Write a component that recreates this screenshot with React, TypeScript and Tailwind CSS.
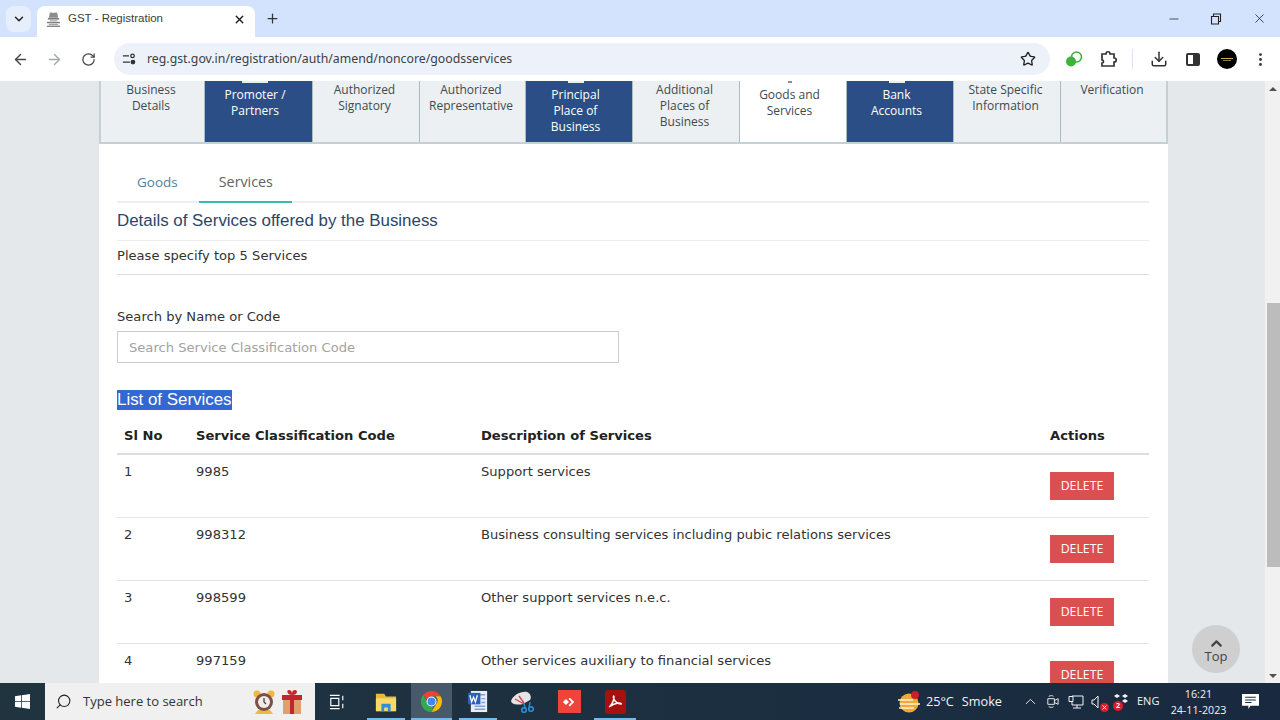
import { ArrowLeft, ArrowRight, ChevronDown, ChevronUp, Download, EllipsisVertical, Plus, RotateCw, Search, Star, X, Minus } from "lucide-react"

const steps = [
  { lines: ["Business", "Details"], kind: "plain" },
  { lines: ["Promoter /", "Partners"], kind: "done", mark: "w-[26px]" },
  { lines: ["Authorized", "Signatory"], kind: "plain" },
  { lines: ["Authorized", "Representative"], kind: "plain" },
  { lines: ["Principal", "Place of", "Business"], kind: "done", mark: "w-4" },
  { lines: ["Additional", "Places of", "Business"], kind: "plain" },
  { lines: ["Goods and", "Services"], kind: "current", mark: "w-1" },
  { lines: ["Bank", "Accounts"], kind: "done", mark: "w-4" },
  { lines: ["State Specific", "Information"], kind: "plain" },
  { lines: ["Verification"], kind: "plain" },
]

const services = [
  { no: 1, code: "9985", desc: "Support services" },
  { no: 2, code: "998312", desc: "Business consulting services including pubic relations services" },
  { no: 3, code: "998599", desc: "Other support services n.e.c." },
  { no: 4, code: "997159", desc: "Other services auxiliary to financial services" },
]

function Emblem() {
  return (
    <svg viewBox="0 0 16 16" className="h-[15px] w-[15px]">
      <path d="M4 1c1-1 3 0 4 0s3-1 4 0l1 5H3z" fill="#8d8d8d" />
      <path d="M2 6.500h12V8H2z" fill="#6f6f6f" />
      <path d="M4 8.500h8v1.500H4z" fill="#b5b5b5" />
      <path d="M1 10.500h14V12H1z" fill="#7d7d7d" />
      <path d="M3 12.500h10V14H3z" fill="#a5a5a5" />
      <path d="M1 14.500h14V16H1z" fill="#858585" />
    </svg>
  )
}

function ChromeLogo() {
  return (
    <svg viewBox="0 0 24 24" className="h-[23px] w-[23px]">
      <path d="M12 1a11 11 0 0 1 9.500 5.500H12a5.500 5.500 0 0 0-5 3.200L3.500 5A11 11 0 0 1 12 1z" fill="#ea4335" />
      <path d="M21.500 6.500A11 11 0 0 1 12 23l4.800-8.200a5.500 5.500 0 0 0-.6-8.300z" fill="#fbbc05" />
      <path d="M12 23A11 11 0 0 1 3.500 5L8 13.500a5.500 5.500 0 0 0 6 4z" fill="#34a853" />
      <circle cx="12" cy="12" r="5.200" fill="#fff" />
      <circle cx="12" cy="12" r="4.200" fill="#4285f4" />
    </svg>
  )
}

function TaskIcons() {
  return (
    <div className="flex h-full">
      {/* task view */}
      <div className="flex w-[44px] items-center justify-center">
        <svg viewBox="0 0 18 18" className="h-4 w-4" fill="none" stroke="#fff" strokeWidth="1.300">
          <path d="M1 1.500h11M1 16.500h11M2 5h9v8H2zM15.500 2v5M15.500 11v5" />
        </svg>
      </div>
      <div className="relative ml-[5px] flex w-[44px] items-center justify-center">
        <svg viewBox="0 0 24 24" className="h-[22px] w-[22px]">
          <path d="M1 3h9l2 3h11v16H1z" fill="#e8b93f" />
          <path d="M1 8h22v14H1z" fill="#fbd968" />
          <path d="M7 14h10v8h-3v-4h-4v4H7z" fill="#2e8fd6" />
        </svg>
        <div className="absolute bottom-0 left-[3px] right-[3px] h-[2px] bg-[#76b9ed]" />
      </div>
      <div className="relative ml-[3px] flex w-[41px] items-center justify-center bg-[#47596a]">
        <ChromeLogo />
        <div className="absolute bottom-0 left-0 right-0 h-[2px] bg-[#76b9ed]" />
      </div>
      <div className="relative ml-[4px] flex w-[44px] items-center justify-center">
        <svg viewBox="0 0 24 24" className="h-[23px] w-[23px]">
          <path d="M4 1h17v22H4z" fill="#e9eef6" />
          <path d="M12 5h7M15 9h4M15 13h4M8 17h11M8 20h11" stroke="#7ca3d8" strokeWidth="1.500" />
          <path d="M1 3h13v12H1z" fill="#2b62b8" />
          <path d="M3 5.500l1.800 7 2-5 2 5 2-7" fill="none" stroke="#fff" strokeWidth="1.300" />
        </svg>
        <div className="absolute bottom-0 left-[3px] right-[3px] h-[2px] bg-[#76b9ed]" />
      </div>
      <div className="flex w-[44px] items-center justify-center">
        <svg viewBox="0 0 24 24" className="h-[24px] w-[24px]">
          <path d="M1 11C3 5 11 1 17 2c3 1 5 5 3 8l-7 4c-5 1-11 1-12-3z" fill="#e9e4e4" />
          <path d="M5 9l9 5M9 6l5 7" stroke="#c94a56" strokeWidth="1.400" />
          <circle cx="14" cy="20" r="2.300" fill="none" stroke="#2a8fd8" strokeWidth="1.600" />
          <circle cx="21" cy="19" r="2.300" fill="none" stroke="#2a8fd8" strokeWidth="1.600" />
          <path d="M14 13l1 5M20 12l-1 6" stroke="#2a8fd8" strokeWidth="1.400" />
        </svg>
      </div>
      <div className="ml-[3px] flex w-[44px] items-center justify-center">
        <div className="flex h-[23px] w-[23px] items-center justify-center bg-[#ef443b]">
          <svg viewBox="0 0 16 16" className="h-[14px] w-[14px]" fill="#fff">
            <path d="M4.500 4.500L8 8l-3.500 3.500L1 8zM9 3l5 5-5 5-1.500-1.500L11 8 7.500 4.500z" />
          </svg>
        </div>
      </div>
      <div className="relative ml-[2px] flex w-[44px] items-center justify-center">
        <div className="flex h-[24px] w-[21px] items-center justify-center rounded-[3px] bg-[#a80f0f]">
          <svg viewBox="0 0 16 16" className="h-[16px] w-[16px]" fill="none" stroke="#fff" strokeWidth="1.400">
            <path d="M2 13c3-2 5-7 5-10 0-2-1-1-.5 1 .8 3 4 6 7.500 6 1 0-.5-1.500-3-1-3 .5-6 2-9 4z" />
          </svg>
        </div>
        <div className="absolute bottom-0 left-[1px] right-[1px] h-[2px] bg-[#76b9ed]" />
      </div>
    </div>
  )
}

function Tray() {
  return (
    <div className="ml-auto flex h-full items-center text-[#f2f4f5] font-['Open_Sans',sans-serif]">
      <svg viewBox="0 0 24 24" className="h-[24px] w-[24px]">
        <circle cx="12" cy="13" r="9.500" fill="#f2a93b" />
        <path d="M1 10h15M3 14h20M2 18h15" stroke="#fff1cf" strokeWidth="1.500" />
        <circle cx="18" cy="5" r="4" fill="#c8202a" />
      </svg>
      <span className="ml-[5px] text-[12.700px]">25°C</span>
      <span className="ml-[8px] text-[12.700px]">Smoke</span>
      <ChevronUp className="ml-[20px] h-[17px] w-[17px]" strokeWidth={1.300} />
      <svg viewBox="0 0 16 16" className="ml-[6px] h-[15px] w-[15px]" fill="none" stroke="#f2f4f5" strokeWidth="1">
        <path d="M3 5h7v6H3zM10 7l4-2v6l-4-2M4 2.500c2-1 4-1 5 0M4 13.500c2 1 4 1 5 0" />
      </svg>
      <svg viewBox="0 0 16 16" className="ml-[8px] h-[16px] w-[16px]" fill="none" stroke="#f2f4f5" strokeWidth="1">
        <path d="M4 2h11v9H4M1 2.500h4v5H1zM9 11v3M5 14h8M4 8v3" />
      </svg>
      <div className="relative ml-[7px] h-[16px] w-[16px]">
        <svg viewBox="0 0 16 16" className="h-[16px] w-[16px]" fill="none" stroke="#f2f4f5" strokeWidth="1">
          <path d="M1 6h2l4-4v12l-4-4H1z" />
        </svg>
        <div className="absolute bottom-[-2px] right-[-2px] flex h-[9px] w-[9px] items-center justify-center rounded-full bg-[#d3202c]">
          <X className="h-[7px] w-[7px] text-white" strokeWidth={3} />
        </div>
      </div>
      <div className="relative ml-[6px] h-[16px] w-[16px]">
        <svg viewBox="0 0 16 16" className="h-[16px] w-[16px]" fill="#f2f4f5">
          <path d="M4 0l3 2-3 2-3-2zM12 0l3 2-3 2-3-2zM12 5l3 2-3 2-3-2z" />
        </svg>
        <div className="absolute bottom-[-1px] left-0 flex h-[10px] w-[10px] items-center justify-center rounded-full bg-[#d3202c] text-[7px] font-bold leading-none text-white">2</div>
      </div>
      <span className="ml-[8px] w-[22px] text-[11px]">ENG</span>
      <div className="ml-[12px] flex w-[55px] flex-col items-center text-[10.700px] leading-[16px]">
        <span>16:21</span>
        <span className="whitespace-nowrap">24-11-2023</span>
      </div>
      <div className="ml-[13px] flex w-[22px] justify-center">
        <svg viewBox="0 0 16 16" className="h-[17px] w-[17px]" fill="#fff">
          <path d="M0 1h16v11H8l-2 3v-3H0z" />
          <path d="M3 4h10M3 6.500h10M3 9h6" stroke="#1b2d3e" strokeWidth="1" />
        </svg>
      </div>
      <div className="w-[19px]" />
    </div>
  )
}

export default function App() {
  return (
    <div className="flex h-[720px] w-[1280px] flex-col overflow-hidden bg-white font-['Noto_Sans',sans-serif]">
      {/* tab strip */}
      <div className="flex h-[37px] items-end bg-[#d3e3fd] pl-[6px]">
        <div className="mb-[5px] flex h-[26px] w-[25px] items-center justify-center rounded-lg bg-[#e7eefb]">
          <ChevronDown className="h-[14px] w-[14px] text-[#1f1f1f]" strokeWidth={2.500} />
        </div>
        <div className="ml-[6px] flex h-[31px] w-[218px] items-center rounded-t-lg bg-white pb-[5px] pl-[9px] pr-[9px]">
          <Emblem />
          <span className="ml-[7px] font-['Liberation_Sans',sans-serif] text-[11.500px] text-[#3c4043]">GST - Registration</span>
          <X className="ml-auto h-[13px] w-[13px] text-[#1f1f1f]" strokeWidth={2.500} />
        </div>
        <Plus className="mb-[11px] ml-[10px] h-[15px] w-[15px] text-[#333]" strokeWidth={2} />
        <div className="mb-[11px] ml-auto flex items-center pr-[13px] text-[#222]">
          <Minus className="h-[14px] w-[14px]" strokeWidth={1.300} />
          <svg viewBox="0 0 12 12" className="ml-[29px] h-[12px] w-[12px]" fill="none" stroke="currentColor" strokeWidth="1.100">
            <path d="M1.500 3.500h7v7.500h-7zM3.500 3.500V1h7v7.500H8.500" />
          </svg>
          <X className="ml-[30px] h-[15px] w-[15px]" strokeWidth={1.300} />
        </div>
      </div>

      {/* toolbar */}
      <div className="flex h-[44px] items-center rounded-t-lg bg-white pl-[12px]">
        <ArrowLeft className="h-[17px] w-[17px] text-[#444746]" strokeWidth={2} />
        <ArrowRight className="ml-[17px] h-[17px] w-[17px] text-[#a5a7a9]" strokeWidth={2} />
        <RotateCw className="ml-[18px] h-[15px] w-[15px] text-[#444746]" strokeWidth={2} />
        <div className="ml-[18px] flex h-[32px] w-[936px] shrink-0 items-center rounded-full bg-[#edf2fa] pl-[8px] pr-[14px]">
          <svg viewBox="0 0 16 16" className="h-[14px] w-[14px]" fill="none" stroke="#333" strokeWidth="1.500">
            <path d="M1 4.500h7M1 11.500h8" />
            <circle cx="12" cy="4.500" r="2" />
            <circle cx="12.500" cy="11.500" r="2" fill="#333" />
          </svg>
          <span className="ml-[11px] pt-[1px] text-[12.300px] text-[#3c4043]">reg.gst.gov.in/registration/auth/amend/noncore/goodsservices</span>
          <Star className="ml-auto h-[16px] w-[16px] text-[#222]" strokeWidth={2} />
        </div>
        <svg viewBox="0 0 18 18" className="ml-[15px] h-[18px] w-[18px] shrink-0" fill="none">
          <circle cx="6" cy="11.500" r="5" fill="#3cb43c" />
          <circle cx="11.500" cy="7" r="5" stroke="#3cb43c" strokeWidth="1.600" />
        </svg>
        <svg viewBox="0 0 18 18" className="ml-[17px] h-[18px] w-[18px] shrink-0" fill="none" stroke="#333" strokeWidth="1.700">
          <path d="M2 4h4c0-3 4-3 4 0h4v4c3 0 3 4 0 4v4H2v-3c2 0 2-3 0-3z" />
        </svg>
        <div className="ml-[14px] h-[20px] w-px shrink-0 bg-[#d9e4f5]" />
        <Download className="ml-[17px] h-[18px] w-[18px] shrink-0 text-[#333]" strokeWidth={2} />
        <div className="ml-[18px] flex h-[13px] w-[14px] shrink-0 justify-end rounded-[2px] border-2 border-[#333]">
          <div className="h-full w-[5px] bg-[#333]" />
        </div>
        <div className="ml-[17px] flex h-[20px] w-[20px] shrink-0 flex-col items-center justify-center rounded-full bg-black">
          <div className="h-px w-[12px] bg-[#c9a94a]" />
          <div className="mt-px h-px w-[8px] bg-[#8a7a3a]" />
        </div>
        <EllipsisVertical className="ml-[15px] h-[17px] w-[17px] shrink-0 text-[#333]" strokeWidth={2} />
      </div>

      {/* page */}
      <div className="relative flex min-h-0 flex-1 overflow-hidden bg-[#e4e8eb]">
        <div className="ml-[99px] w-[1069px] bg-white">
          <div className="grid h-[63px] grid-cols-[106px_108px_107px_106px_107px_107px_107px_107px_107px_107px] border-b-2 border-[#c3d0d4] bg-[#ecf0f2] text-center font-['Open_Sans',sans-serif] text-[12px] leading-[16px]">
            {steps.map((s, i) => (
              <div
                key={i}
                className={
                  s.kind === "done"
                    ? "bg-[#2c4e86] pr-[7px] text-white border-r border-[#a9bcc4]"
                    : s.kind === "current"
                      ? "bg-white pr-[7px] text-[#3e4a50] border-r border-[#a9bcc4]"
                      : "pr-[3px] pt-[1px] text-[#3e4a50] border-r border-[#a9bcc4] first:border-l-2 first:border-l-[#c3d0d4] last:border-r-2 last:border-r-[#c3d0d4]"
                }
              >
                {s.mark && (
                  <div className="flex h-[6px] justify-center">
                    <div className={`h-[2px] ${s.mark} ${s.kind === "done" ? "bg-[#e8edf3]" : "bg-[#8b8f92]"}`} />
                  </div>
                )}
                {s.lines.map(l => (
                  <div key={l} className="whitespace-nowrap">{l}</div>
                ))}
              </div>
            ))}
          </div>

          <div className="pl-[18px] pr-[19px]">
            {/* tabs */}
            <div className="flex h-[59px] items-end border-b-2 border-[#eeeeee] font-['Open_Sans',sans-serif]">
              <div className="mb-[9px] ml-[20px] text-[13.500px] text-[#4f7f9f]">Goods</div>
              <div className="-mb-[2px] ml-[21px] border-b-2 border-[#37bcb4] pb-[9px] pl-[20px] pr-[19px] text-[14.300px] text-[#5d6468]">Services</div>
            </div>
            <h3 className="flex h-[38px] items-center border-b border-[#ededed] pb-[2px] font-['Liberation_Sans',sans-serif] text-[16.900px] text-[#2c4668]">
              Details of Services offered by the Business
            </h3>
            <p className="flex h-[34px] items-center border-b border-[#dcdcdc] pb-[3px] font-['DejaVu_Sans',sans-serif] text-[13.100px] text-[#333]">
              Please specify top 5 Services
            </p>

            <label className="mt-[33px] block font-['DejaVu_Sans',sans-serif] text-[13.100px] leading-[18px] text-[#333]">Search by Name or Code</label>
            <div className="mt-[5px] flex h-[32px] w-[502px] items-center border border-[#cccccc] pl-[11px] pt-[1px] font-['DejaVu_Sans',sans-serif] text-[13.100px] text-[#a3a3a3]">
              Search Service Classification Code
            </div>

            <div className="mt-[27px] flex">
              <span className="bg-[#3367d1] font-['Liberation_Sans',sans-serif] text-[16.900px] leading-[20px] text-white">List of Services</span>
            </div>

            {/* table */}
            <div className="mt-[9px] font-['DejaVu_Sans',sans-serif] text-[13.100px] text-[#333]">
              <div className="grid h-[36px] grid-cols-[72px_285px_569px_1fr] items-center border-b-2 border-[#dddddd] pl-[7px] font-bold text-[#222]">
                <div>Sl No</div>
                <div>Service Classification Code</div>
                <div>Description of Services</div>
                <div>Actions</div>
              </div>
              {services.map(s => (
                <div key={s.no} className="grid h-[63px] grid-cols-[72px_285px_569px_1fr] border-b border-[#e4e4e4] pl-[7px] pt-[7px]">
                  <div>{s.no}</div>
                  <div>{s.code}</div>
                  <div>{s.desc}</div>
                  <div className="pt-[10px]">
                    <button className="flex h-[28px] w-[64px] items-center justify-center bg-[#dc4f50] font-['Open_Sans',sans-serif] text-[12.300px] text-white">DELETE</button>
                  </div>
                </div>
              ))}
            </div>
          </div>
        </div>

        {/* scroll-to-top button */}
        <div className="absolute left-[1192px] top-[544px] flex h-[48px] w-[48px] flex-col items-center justify-center rounded-full bg-[#cfcfcf] font-['Open_Sans',sans-serif] text-[13px] leading-[13px] text-[#444]">
          <ChevronUp className="-mb-[2px] h-[17px] w-[17px]" strokeWidth={3} />
          Top
        </div>

        {/* scrollbar */}
        <div className="ml-auto flex w-[15px] flex-col bg-[#f1f1f1]">
          <div className="flex h-[15px] items-center justify-center">
            <div className="h-0 w-0 border-x-[4px] border-b-[4px] border-x-transparent border-b-[#505050]" />
          </div>
          <div className="mt-[207px] ml-[2px] h-[264px] bg-[#bcbcbc]" />
          <div className="mt-auto flex h-[15px] items-center justify-center">
            <div className="h-0 w-0 border-x-[4px] border-t-[4px] border-x-transparent border-t-[#505050]" />
          </div>
        </div>
      </div>

      {/* taskbar */}
      <div className="flex h-[37px] shrink-0 items-center bg-linear-to-r from-[#203440] to-[#192a40]">
        <div className="flex h-full w-[45px] items-center justify-center">
          <svg viewBox="0 0 16 16" className="h-[15px] w-[15px]" fill="#fff">
            <path d="M0 2.300l6.500-.9v6.200H0zM7.300 1.300L16 0v7.600H7.300zM0 8.400h6.500v6.200L0 13.700zM7.300 8.400H16V16l-8.700-1.300z" />
          </svg>
        </div>
        <div className="flex h-full w-[270px] items-center bg-[#f0f0f0] pl-[10px] pr-[12px] text-[#222]">
          <Search className="h-[17px] w-[17px] -scale-x-100" strokeWidth={1.500} />
          <span className="ml-[11px] font-['Open_Sans',sans-serif] text-[13px] text-[#333]">Type here to search</span>
          <svg viewBox="0 0 24 26" className="ml-auto h-[26px] w-[24px]">
            <circle cx="5" cy="5" r="3.500" fill="#f0b840" />
            <circle cx="19" cy="5" r="3.500" fill="#f0b840" />
            <path d="M3 25h18l-3-4H6z" fill="#f0b840" />
            <circle cx="12" cy="13" r="9" fill="#7a5048" />
            <circle cx="12" cy="13" r="6" fill="#f3ece6" />
            <path d="M12 9v4l2 2" stroke="#444" fill="none" strokeWidth="1.300" />
          </svg>
          <svg viewBox="0 0 22 26" className="ml-[5px] h-[26px] w-[22px]">
            <path d="M2 10h18v15H2z" fill="#dfa070" />
            <path d="M1 6h20v5H1zM9 6h4v19H9z" fill="#c0272d" />
            <path d="M11 6C6 6 5 1 8 1s3 3 3 5c0-2 0-5 3-5s3 5-3 5z" fill="#c0272d" />
          </svg>
        </div>
        <TaskIcons />
        <Tray />
      </div>
    </div>
  )
}
